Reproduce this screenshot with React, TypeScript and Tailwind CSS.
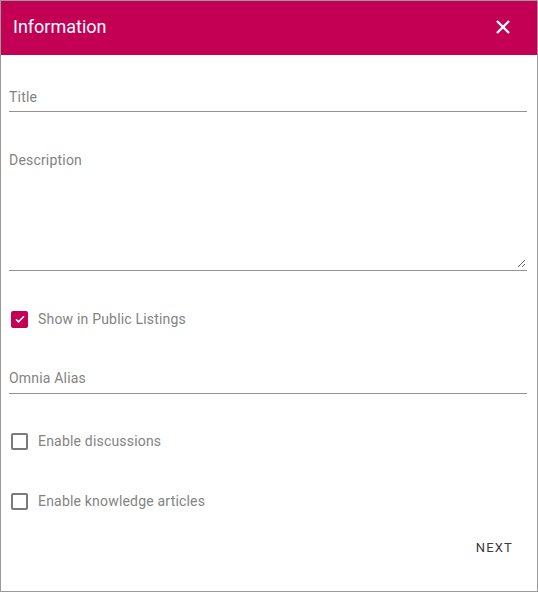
import React from "react";

function Check({ checked }: { checked?: boolean }) {
  if (checked) {
    return (
      <div className="w-[17px] h-[17px] rounded-[2px] bg-[#c40055] flex items-center justify-center ml-[2px] shrink-0">
        <svg width="12" height="12" viewBox="0 0 24 24">
          <path d="M4 12.5l5 5L20 6.5" fill="none" stroke="#fff" strokeWidth="3.2" />
        </svg>
      </div>
    );
  }
  return <div className="w-[17px] h-[17px] rounded-[2px] border-2 border-[#7a7a7a] ml-[2px] shrink-0" />;
}

export default function App() {
  return (
    <div
      className="w-[538px] h-[592px] border border-[#9a9a9a] bg-white flex flex-col"
      style={{ fontFamily: "Roboto, 'Liberation Sans', sans-serif" }}
    >
      <div className="h-[54px] bg-[#c40055] flex items-center justify-between pl-[12px] pr-[26px] shrink-0">
        <span className="text-white text-[18px] leading-[24px] mt-[-3px]">Information</span>
        <svg width="16" height="16" viewBox="0 0 16 16" className="mt-[-3px]">
          <path d="M2 2L14 14M14 2L2 14" stroke="#fff" strokeWidth="2.4" />
        </svg>
      </div>
      <div className="flex flex-col pl-[8px] pr-[10px] text-[#838383] tracking-[0.012em]">
        <div className="mt-[32px] pb-[4px] border-b border-[#949494] text-[14px] leading-[20px]">
          Title
        </div>
        <div className="relative mt-[38px] h-[121px] border-b border-[#949494] text-[14px] leading-[20px]">
          Description
          <svg width="9" height="9" viewBox="0 0 9 9" className="absolute right-[1px] bottom-[2px]">
            <path d="M1 8L8 1M5 8L8 5" stroke="#666" strokeWidth="1" />
          </svg>
        </div>
        <div className="mt-[38px] h-[20px] flex items-center text-[14px]">
          <Check checked />
          <span className="ml-[10px] leading-[20px]">Show in Public Listings</span>
        </div>
        <div className="mt-[39px] pb-[5px] border-b border-[#949494] text-[14px] leading-[20px]">
          Omnia Alias
        </div>
        <div className="mt-[37px] h-[20px] flex items-center text-[14px]">
          <Check />
          <span className="ml-[10px] leading-[20px]">Enable discussions</span>
        </div>
        <div className="mt-[40px] h-[20px] flex items-center text-[14px]">
          <Check />
          <span className="ml-[10px] leading-[20px]">Enable knowledge articles</span>
        </div>
        <div className="mt-[27px] flex justify-end pr-[14px]">
          <span className="text-[13px] leading-[20px] font-normal tracking-[0.09em] text-[#3a3a3a]">NEXT</span>
        </div>
      </div>
    </div>
  );
}
